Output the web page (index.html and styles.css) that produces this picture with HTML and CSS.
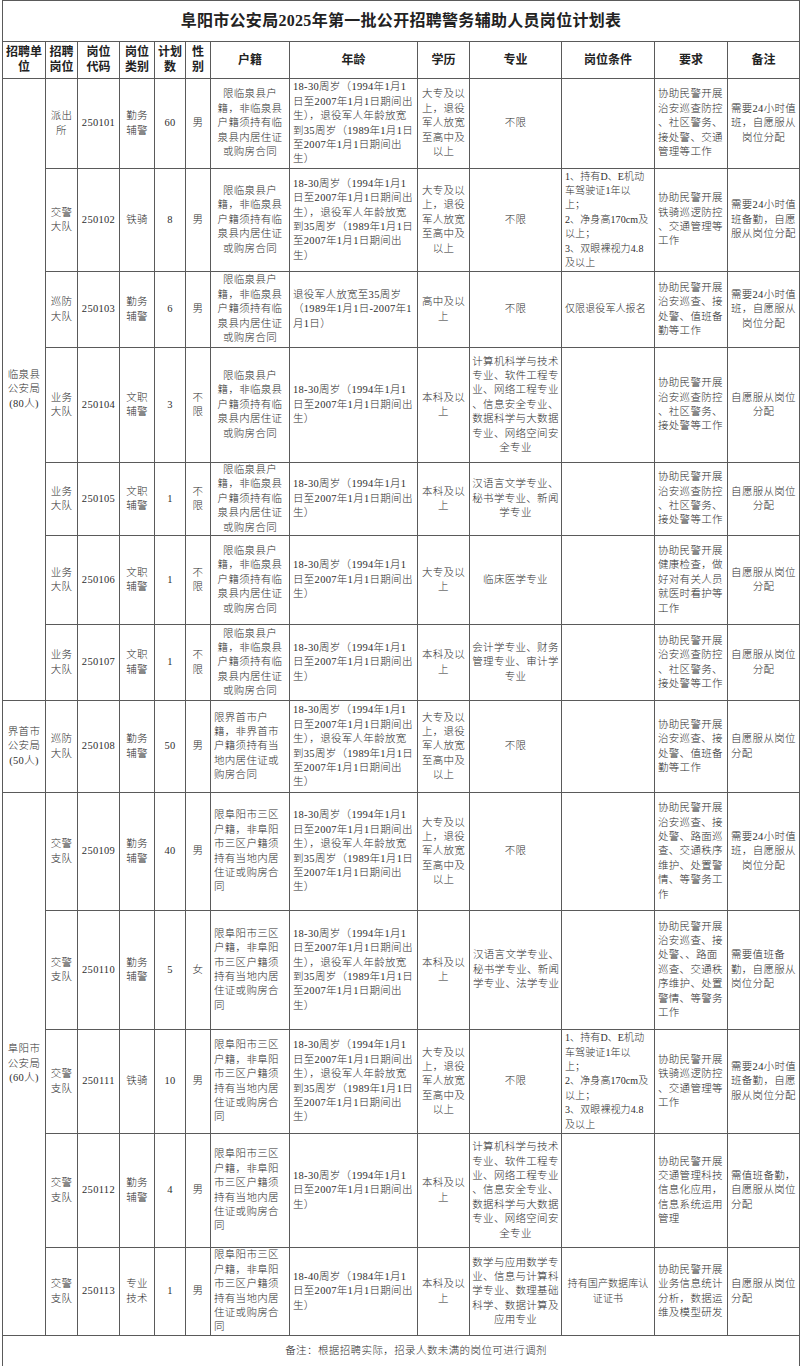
FILE: index.html
```html
<!DOCTYPE html>
<html lang="zh-CN">
<head>
<meta charset="utf-8">
<title>阜阳市公安局2025年第一批公开招聘警务辅助人员岗位计划表</title>
<link rel="stylesheet" href="styles.css">
</head>
<body>
<div class="sheet">
<table class="plan">
<colgroup>
<col class="w43"><col class="w32"><col class="w42"><col class="w35"><col class="w31"><col class="w25"><col class="w79"><col class="w128"><col class="w52"><col class="w92"><col class="w93"><col class="w73"><col class="w72">
</colgroup>
<tr class="h41"><th class="title" colspan="13">阜阳市公安局2025年第一批公开招聘警务辅助人员岗位计划表</th></tr>
<tr class="h37 head">
<th>招聘单<br>位</th><th>招聘<br>岗位</th><th>岗位<br>代码</th><th>岗位<br>类别</th><th>计划<br>数</th><th>性<br>别</th><th>户籍</th><th>年龄</th><th>学历</th><th>专业</th><th>岗位条件</th><th>要求</th><th>备注</th>
</tr>

<tr class="h90">
<td rowspan="7">临泉县<br>公安局<br>(80人)</td>
<td>派出<br>所</td><td>250101</td><td>勤务<br>辅警</td><td>60</td><td>男</td>
<td>限临泉县户<br>籍，非临泉县<br>户籍须持有临<br>泉县内居住证<br>或购房合同</td>
<td class="l">18-30周岁（1994年1月1<br>日至2007年1月1日期间出<br>生），退役军人年龄放宽<br>到35周岁（1989年1月1日<br>至2007年1月1日期间出<br>生）</td>
<td>大专及以<br>上，退役<br>军人放宽<br>至高中及<br>以上</td>
<td>不限</td><td></td>
<td class="l">协助民警开展<br>治安巡查防控<br>、社区警务、<br>接处警、交通<br>管理等工作</td>
<td>需要24小时值<br>班，自愿服从<br>岗位分配</td>
</tr>

<tr class="h103">
<td>交警<br>大队</td><td>250102</td><td>铁骑</td><td>8</td><td>男</td>
<td>限临泉县户<br>籍，非临泉县<br>户籍须持有临<br>泉县内居住证<br>或购房合同</td>
<td class="l">18-30周岁（1994年1月1<br>日至2007年1月1日期间出<br>生），退役军人年龄放宽<br>到35周岁（1989年1月1日<br>至2007年1月1日期间出<br>生）</td>
<td>大专及以<br>上，退役<br>军人放宽<br>至高中及<br>以上</td>
<td>不限</td>
<td class="l cond">1、持有D、E机动<br>车驾驶证1年以<br>上；<br>2、净身高170cm及<br>以上；<br>3、双眼裸视力4.8<br>及以上</td>
<td class="l">协助民警开展<br>铁骑巡逻防控<br>、交通管理等<br>工作</td>
<td class="l">需要24小时值<br>班备勤，自愿<br>服从岗位分配</td>
</tr>

<tr class="h76">
<td>巡防<br>大队</td><td>250103</td><td>勤务<br>辅警</td><td>6</td><td>男</td>
<td>限临泉县户<br>籍，非临泉县<br>户籍须持有临<br>泉县内居住证<br>或购房合同</td>
<td class="l">退役军人放宽至35周岁<br>（1989年1月1日-2007年1<br>月1日）</td>
<td>高中及以<br>上</td>
<td>不限</td>
<td class="l cond">仅限退役军人报名</td>
<td class="l">协助民警开展<br>治安巡查、接<br>处警、值班备<br>勤等工作</td>
<td>需要24小时值<br>班，自愿服从<br>岗位分配</td>
</tr>

<tr class="h115">
<td>业务<br>大队</td><td>250104</td><td>文职<br>辅警</td><td>3</td><td>不<br>限</td>
<td>限临泉县户<br>籍，非临泉县<br>户籍须持有临<br>泉县内居住证<br>或购房合同</td>
<td class="l">18-30周岁（1994年1月1<br>日至2007年1月1日期间出<br>生）</td>
<td>本科及以<br>上</td>
<td>计算机科学与技术<br>专业、软件工程专<br>业、网络工程专业<br>、信息安全专业、<br>数据科学与大数据<br>专业、网络空间安<br>全专业</td>
<td></td>
<td class="l">协助民警开展<br>治安巡查防控<br>、社区警务、<br>接处警等工作</td>
<td>自愿服从岗位<br>分配</td>
</tr>

<tr class="h72">
<td>业务<br>大队</td><td>250105</td><td>文职<br>辅警</td><td>1</td><td>不<br>限</td>
<td>限临泉县户<br>籍，非临泉县<br>户籍须持有临<br>泉县内居住证<br>或购房合同</td>
<td class="l">18-30周岁（1994年1月1<br>日至2007年1月1日期间出<br>生）</td>
<td>本科及以<br>上</td>
<td>汉语言文学专业、<br>秘书学专业、新闻<br>学专业</td>
<td></td>
<td class="l">协助民警开展<br>治安巡查防控<br>、社区警务、<br>接处警等工作</td>
<td>自愿服从岗位<br>分配</td>
</tr>

<tr class="h89">
<td>业务<br>大队</td><td>250106</td><td>文职<br>辅警</td><td>1</td><td>不<br>限</td>
<td>限临泉县户<br>籍，非临泉县<br>户籍须持有临<br>泉县内居住证<br>或购房合同</td>
<td class="l">18-30周岁（1994年1月1<br>日至2007年1月1日期间出<br>生）</td>
<td>大专及以<br>上</td>
<td>临床医学专业</td>
<td></td>
<td class="l">协助民警开展<br>健康检查，做<br>好对有关人员<br>就医时看护等<br>工作</td>
<td>自愿服从岗位<br>分配</td>
</tr>

<tr class="h76">
<td>业务<br>大队</td><td>250107</td><td>文职<br>辅警</td><td>1</td><td>不<br>限</td>
<td>限临泉县户<br>籍，非临泉县<br>户籍须持有临<br>泉县内居住证<br>或购房合同</td>
<td class="l">18-30周岁（1994年1月1<br>日至2007年1月1日期间出<br>生）</td>
<td>本科及以<br>上</td>
<td>会计学专业、财务<br>管理专业、审计学<br>专业</td>
<td></td>
<td class="l">协助民警开展<br>治安巡查防控<br>、社区警务、<br>接处警等工作</td>
<td>自愿服从岗位<br>分配</td>
</tr>

<tr class="h92">
<td>界首市<br>公安局<br>(50人)</td>
<td>巡防<br>大队</td><td>250108</td><td>勤务<br>辅警</td><td>50</td><td>男</td>
<td class="l">限界首市户<br>籍，非界首市<br>户籍须持有当<br>地内居住证或<br>购房合同</td>
<td class="l">18-30周岁（1994年1月1<br>日至2007年1月1日期间出<br>生），退役军人年龄放宽<br>到35周岁（1989年1月1日<br>至2007年1月1日期间出<br>生）</td>
<td>大专及以<br>上，退役<br>军人放宽<br>至高中及<br>以上</td>
<td>不限</td>
<td></td>
<td class="l">协助民警开展<br>治安巡查、接<br>处警、值班备<br>勤等工作</td>
<td class="l">自愿服从岗位<br>分配</td>
</tr>

<tr class="h118">
<td rowspan="5">阜阳市<br>公安局<br>(60人)</td>
<td>交警<br>支队</td><td>250109</td><td>勤务<br>辅警</td><td>40</td><td>男</td>
<td class="l">限阜阳市三区<br>户籍，非阜阳<br>市三区户籍须<br>持有当地内居<br>住证或购房合<br>同</td>
<td class="l">18-30周岁（1994年1月1<br>日至2007年1月1日期间出<br>生），退役军人年龄放宽<br>到35周岁（1989年1月1日<br>至2007年1月1日期间出<br>生）</td>
<td>大专及以<br>上，退役<br>军人放宽<br>至高中及<br>以上</td>
<td>不限</td>
<td></td>
<td class="l">协助民警开展<br>治安巡查、接<br>处警、路面巡<br>查、交通秩序<br>维护、处置警<br>情、等警务工<br>作</td>
<td>需要24小时值<br>班，自愿服从<br>岗位分配</td>
</tr>

<tr class="h119">
<td>交警<br>支队</td><td>250110</td><td>勤务<br>辅警</td><td>5</td><td>女</td>
<td class="l">限阜阳市三区<br>户籍，非阜阳<br>市三区户籍须<br>持有当地内居<br>住证或购房合<br>同</td>
<td class="l">18-30周岁（1994年1月1<br>日至2007年1月1日期间出<br>生），退役军人年龄放宽<br>到35周岁（1989年1月1日<br>至2007年1月1日期间出<br>生）</td>
<td>本科及以<br>上</td>
<td class="l">汉语言文学专业、<br>秘书学专业、新闻<br>学专业、法学专业</td>
<td></td>
<td class="l">协助民警开展<br>治安巡查、接<br>处警、、路面<br>巡查、交通秩<br>序维护、处置<br>警情、等警务<br>工作</td>
<td class="l">需要值班备<br>勤，自愿服从<br>岗位分配</td>
</tr>

<tr class="h104">
<td>交警<br>支队</td><td>250111</td><td>铁骑</td><td>10</td><td>男</td>
<td class="l">限阜阳市三区<br>户籍，非阜阳<br>市三区户籍须<br>持有当地内居<br>住证或购房合<br>同</td>
<td class="l">18-30周岁（1994年1月1<br>日至2007年1月1日期间出<br>生），退役军人年龄放宽<br>到35周岁（1989年1月1日<br>至2007年1月1日期间出<br>生）</td>
<td>大专及以<br>上，退役<br>军人放宽<br>至高中及<br>以上</td>
<td>不限</td>
<td class="l cond">1、持有D、E机动<br>车驾驶证1年以<br>上；<br>2、净身高170cm及<br>以上；<br>3、双眼裸视力4.8<br>及以上</td>
<td class="l">协助民警开展<br>铁骑巡逻防控<br>、交通管理等<br>工作</td>
<td class="l">需要24小时值<br>班备勤，自愿<br>服从岗位分配</td>
</tr>

<tr class="h114">
<td>交警<br>支队</td><td>250112</td><td>勤务<br>辅警</td><td>4</td><td>男</td>
<td class="l">限阜阳市三区<br>户籍，非阜阳<br>市三区户籍须<br>持有当地内居<br>住证或购房合<br>同</td>
<td class="l">18-30周岁（1994年1月1<br>日至2007年1月1日期间出<br>生）</td>
<td>本科及以<br>上</td>
<td>计算机科学与技术<br>专业、软件工程专<br>业、网络工程专业<br>、信息安全专业、<br>数据科学与大数据<br>专业、网络空间安<br>全专业</td>
<td></td>
<td class="l">协助民警开展<br>交通管理科技<br>信息化应用，<br>信息系统运用<br>管理</td>
<td class="l">需值班备勤，<br>自愿服从岗位<br>分配</td>
</tr>

<tr class="h88">
<td>交警<br>支队</td><td>250113</td><td>专业<br>技术</td><td>1</td><td>男</td>
<td class="l">限阜阳市三区<br>户籍，非阜阳<br>市三区户籍须<br>持有当地内居<br>住证或购房合<br>同</td>
<td class="l">18-40周岁（1984年1月1<br>日至2007年1月1日期间出<br>生）</td>
<td>本科及以<br>上</td>
<td>数学与应用数学专<br>业、信息与计算科<br>学专业、数理基础<br>科学、数据计算及<br>应用专业</td>
<td class="cond">持有国产数据库认<br>证证书</td>
<td class="l">协助民警开展<br>业务信息统计<br>分析，数据运<br>维及模型研发</td>
<td class="l">自愿服从岗位<br>分配</td>
</tr>

<tr class="h31"><td class="foot" colspan="13">备注：根据招聘实际，招录人数未满的岗位可进行调剂</td></tr>
</table>
</div>
</body>
</html>
```
FILE: styles.css
```css
html, body {
  margin: 0;
  padding: 0;
  background: #ffffff;
}
body {
  font-family: "Liberation Serif", "Noto Sans CJK SC", serif;
  color: #2e2e2e;
}
.sheet {
  padding: 0 1px 0 2px;
}
.plan {
  border-collapse: collapse;
  table-layout: fixed;
  width: 797px;
}
.plan th,
.plan td {
  border: 1px solid #5a5a5a;
  padding: 0 2px;
  font-size: 10.5px;
  line-height: 14.4px;
  letter-spacing: 0.3px;
  font-weight: 300;
  text-align: center;
  vertical-align: middle;
  white-space: nowrap;
}
.plan td.l {
  text-align: left;
  padding-left: 3px;
}
.plan td.cond {
  font-size: 10px;
  letter-spacing: 0.1px;
}
.plan th.title {
  font-size: 16px;
  font-weight: 700;
  letter-spacing: 0.3px;
  color: #222;
}
.head th {
  font-size: 12px;
  line-height: 15px;
  font-weight: 700;
  letter-spacing: 0;
  color: #222;
}
.plan td.foot {
  padding-left: 32px;
  letter-spacing: 0.4px;
}
.w43 { width: 43px; }
.w32 { width: 32px; }
.w42 { width: 42px; }
.w35 { width: 35px; }
.w31 { width: 31px; }
.w25 { width: 25px; }
.w79 { width: 79px; }
.w128 { width: 128px; }
.w52 { width: 52px; }
.w92 { width: 92px; }
.w93 { width: 93px; }
.w73 { width: 73px; }
.w72 { width: 72px; }
.h31 { height: 31px; }
.h37 { height: 37px; }
.h41 { height: 41px; }
.h72 { height: 72px; }
.h76 { height: 76px; }
.h88 { height: 88px; }
.h89 { height: 89px; }
.h90 { height: 90px; }
.h92 { height: 92px; }
.h103 { height: 103px; }
.h104 { height: 104px; }
.h114 { height: 114px; }
.h115 { height: 115px; }
.h118 { height: 118px; }
.h119 { height: 119px; }
```
